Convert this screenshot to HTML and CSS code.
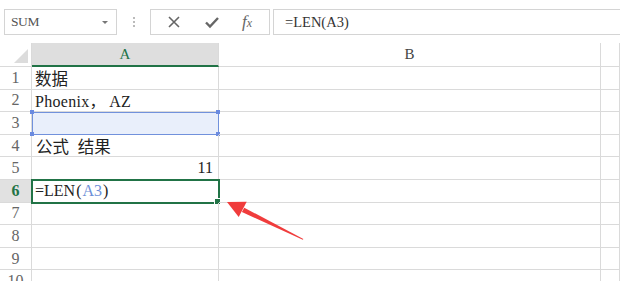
FILE: index.html
```html
<!DOCTYPE html>
<html lang="zh-CN">
<head>
    <meta charset="UTF-8">
    <title>LEN</title>
    <link rel="stylesheet" href="styles.css">
</head>
<body>

    <div class="toolbar">
        <div class="name-box">
            <span class="name-text">SUM</span>
            <span class="name-drop"></span>
        </div>
        <div class="grip">
            <span></span><span></span><span></span>
        </div>
        <div class="fx-buttons">
            <svg class="fx-icon" viewBox="0 0 16 16" width="16" height="16">
                <path d="M3 3l10 10M13 3L3 13" stroke="#666" stroke-width="1.6" fill="none"/>
            </svg>
            <svg class="fx-icon" viewBox="0 0 16 16" width="16" height="16">
                <path d="M2 8.5l4 4L14 4" stroke="#666" stroke-width="2.4" fill="none"/>
            </svg>
            <span class="fx-text">f<small>x</small></span>
        </div>
        <div class="formula-bar">=LEN(A3)</div>
    </div>

    <div class="sheet">
        <div class="corner"></div>
        <div class="col-head active">A</div>
        <div class="col-head">B</div>
        <div class="col-head"></div>

        <div class="row-head">1</div>
        <div class="cell cjk">数据</div>
        <div class="cell"></div>
        <div class="cell"></div>

        <div class="row-head">2</div>
        <div class="cell latin">Phoenix， AZ</div>
        <div class="cell"></div>
        <div class="cell"></div>

        <div class="row-head">3</div>
        <div class="cell ref">
            <span class="handle tl"></span><span class="handle tr"></span>
            <span class="handle bl"></span><span class="handle br"></span>
        </div>
        <div class="cell"></div>
        <div class="cell"></div>

        <div class="row-head">4</div>
        <div class="cell cjk spaced">公式 结果</div>
        <div class="cell"></div>
        <div class="cell"></div>

        <div class="row-head">5</div>
        <div class="cell num">11</div>
        <div class="cell"></div>
        <div class="cell"></div>

        <div class="row-head active">6</div>
        <div class="cell current">=LEN<span class="paren">(</span><span class="ref-text">A3</span><span class="paren">)</span><span class="fill-handle"></span></div>
        <div class="cell"></div>
        <div class="cell"></div>

        <div class="row-head">7</div>
        <div class="cell"></div>
        <div class="cell"></div>
        <div class="cell"></div>

        <div class="row-head">8</div>
        <div class="cell"></div>
        <div class="cell"></div>
        <div class="cell"></div>

        <div class="row-head">9</div>
        <div class="cell"></div>
        <div class="cell"></div>
        <div class="cell"></div>

        <div class="row-head">10</div>
        <div class="cell"></div>
        <div class="cell"></div>
        <div class="cell"></div>
    </div>

    <!-- callout arrow pointing at A6 -->
    <svg class="arrow" viewBox="0 0 620 281" width="620" height="281">
        <polygon points="244.3,207.7 241.9,212.1 302.8,239.8 303.4,239.0" fill="#f03c3c"/>
        <polygon points="227,202 246.7,201.8 238.7,217.1" fill="#f03c3c"/>
    </svg>

</body>
</html>
```

FILE: styles.css
```css
body {
    margin: 0;
    width: 620px;
    height: 281px;
    overflow: hidden;
    position: relative;
    background-color: #fff;
    font-family: "Liberation Serif", "Noto Sans CJK SC", serif;
    color: #222;
}

/* toolbar */

.toolbar {
    display: flex;
    align-items: center;
    height: 26px;
    padding: 9px 0 8px 4px;
}

.name-box {
    box-sizing: border-box;
    width: 113px;
    height: 26px;
    border: 1px solid #d4d4d4;
    display: flex;
    align-items: center;
    justify-content: space-between;
    padding: 0 8px 0 6px;
}

.name-text {
    font-family: "Liberation Serif", serif;
    font-size: 13.5px;
    letter-spacing: -0.4px;
    color: #555;
}

.name-drop {
    width: 0;
    height: 0;
    border-left: 3px solid transparent;
    border-right: 3px solid transparent;
    border-top: 3px solid #777;
}

.grip {
    width: 33px;
    display: flex;
    flex-direction: column;
    align-items: center;
    gap: 2px;
}

.grip span {
    width: 2px;
    height: 2px;
    background-color: #bbb;
}

.fx-buttons {
    box-sizing: border-box;
    width: 120px;
    height: 26px;
    border: 1px solid #d4d4d4;
    display: flex;
    align-items: center;
    justify-content: space-around;
    padding: 0 6px 0 4px;
}

.fx-text {
    font-family: "Liberation Serif", serif;
    font-style: italic;
    font-size: 17px;
    color: #666;
}

.fx-text small {
    font-size: 12px;
}

.formula-bar {
    box-sizing: border-box;
    flex: 1;
    height: 26px;
    margin-left: 3px;
    margin-right: -4px;
    border: 1px solid #d4d4d4;
    display: flex;
    align-items: center;
    padding-left: 11px;
    font-family: "Liberation Serif", serif;
    font-size: 14.5px;
    color: #333;
}

/* sheet grid */

.sheet {
    display: grid;
    grid-template-columns: 32px 187px 382px 1fr;
    grid-template-rows: 24px repeat(10, 22.6px);
}

.sheet > div {
    box-sizing: border-box;
    border-right: 1px solid #dadada;
    border-bottom: 1px solid #dadada;
}

.corner {
    position: relative;
    background-color: #fff;
}

.corner::after {
    content: "";
    position: absolute;
    right: 3px;
    bottom: 3px;
    border-left: 14px solid transparent;
    border-bottom: 14px solid #dcdcdc;
}

.col-head {
    display: flex;
    align-items: center;
    justify-content: center;
    font-size: 15px;
    color: #444;
}

.col-head.active {
    background-color: #dedede;
    color: #217346;
    border-bottom: 2px solid #217346;
}

.row-head {
    display: flex;
    align-items: center;
    justify-content: center;
    font-size: 16px;
    color: #666;
}

.row-head.active {
    background-color: #e1e1e1;
    color: #217346;
    font-weight: bold;
}

.cell {
    position: relative;
    display: flex;
    align-items: center;
    padding-left: 3px;
    font-size: 16px;
    white-space: nowrap;
}

.cjk {
    font-family: "Noto Sans CJK SC", sans-serif;
    font-size: 16.5px;
    color: #222;
}

.spaced {
    padding-left: 4px;
    word-spacing: 5px;
}

.latin {
    font-family: "Liberation Serif", "Noto Sans CJK SC", serif;
    font-size: 16px;
    letter-spacing: 0.3px;
    color: #222;
}

.num {
    justify-content: flex-end;
    padding-right: 5px;
    font-size: 16px;
}

.ref {
    background-color: #e9effb;
    outline: 1px solid #7191dc;
    outline-offset: -1px;
}

.handle {
    position: absolute;
    width: 4px;
    height: 4px;
    background-color: #6b8be0;
}

.handle.tl { left: -2px; top: -2px; }
.handle.tr { right: -2px; top: -2px; }
.handle.bl { left: -2px; bottom: -2px; }
.handle.br { right: -2px; bottom: -2px; }

.current {
    outline: 2px solid #217346;
    outline-offset: -1px;
    font-size: 16px;
    color: #222;
}

.paren {
    margin: 0 1px;
}

.ref-text {
    color: #6d8fd8;
}

.fill-handle {
    position: absolute;
    right: -3px;
    bottom: -3px;
    width: 5px;
    height: 5px;
    background-color: #217346;
    border: 1px solid #fff;
}

.arrow {
    position: absolute;
    left: 0;
    top: 0;
    pointer-events: none;
}
```
